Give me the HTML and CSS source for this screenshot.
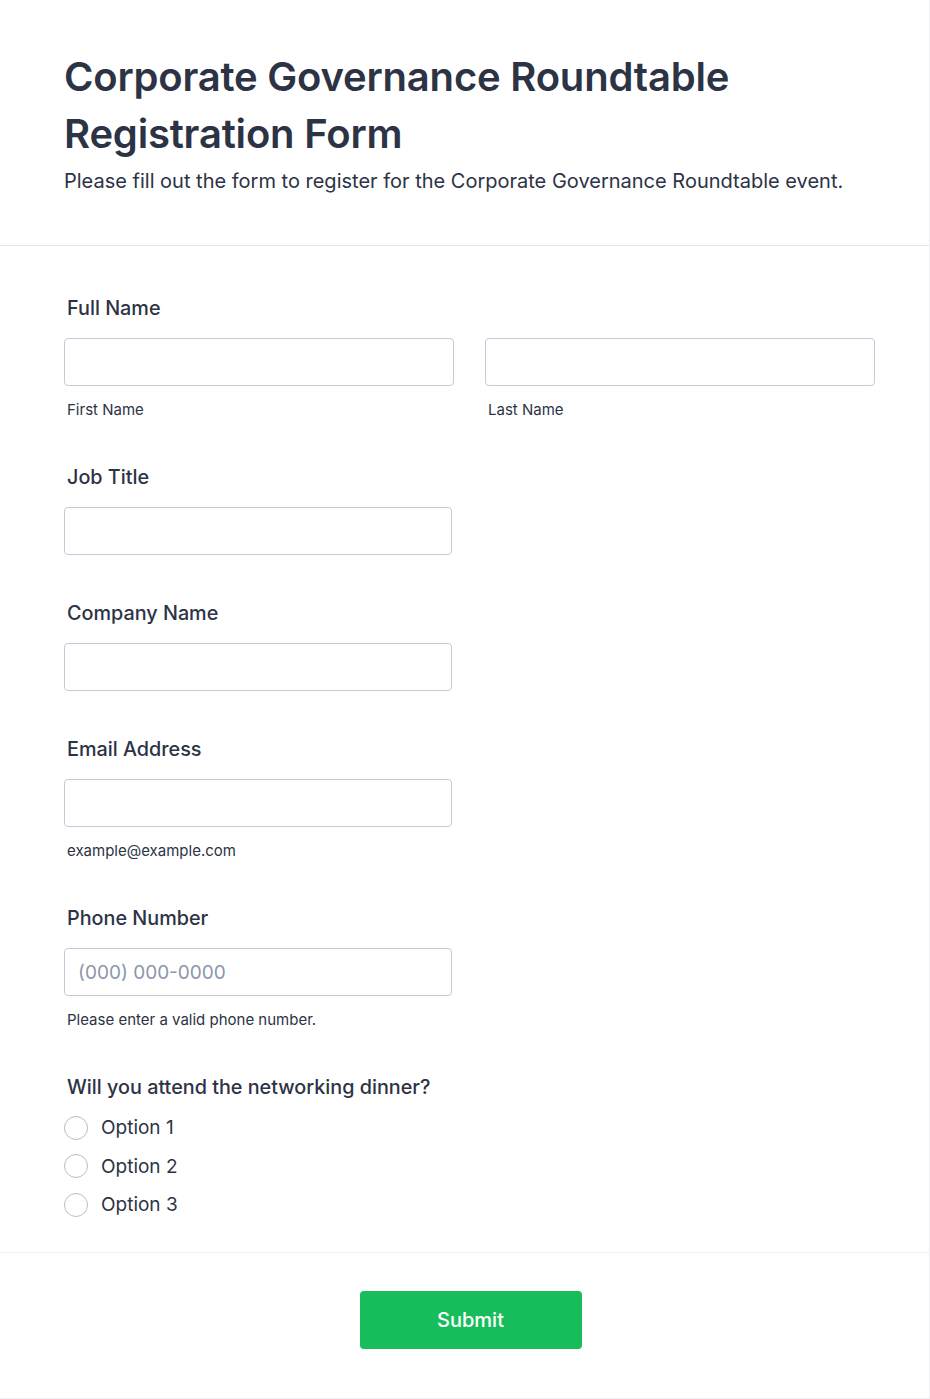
FILE: index.html
```html
<!DOCTYPE html>
<html lang="en">
<head>
<meta charset="utf-8">
<title>Corporate Governance Roundtable Registration Form</title>
<link rel="stylesheet" href="styles.css">
</head>
<body>
<div class="card">
  <header class="form-header">
    <h1 class="title">Corporate Governance Roundtable Registration Form</h1>
    <p class="subtitle">Please fill out the form to register for the Corporate Governance Roundtable event.</p>
  </header>
  <form class="form-body">
    <div class="field">
      <label class="label">Full Name</label>
      <div class="name-row">
        <div class="name-col">
          <input class="input" type="text">
          <span class="sublabel">First Name</span>
        </div>
        <div class="name-col">
          <input class="input" type="text">
          <span class="sublabel">Last Name</span>
        </div>
      </div>
    </div>
    <div class="field">
      <label class="label">Job Title</label>
      <input class="input input-half" type="text">
    </div>
    <div class="field">
      <label class="label">Company Name</label>
      <input class="input input-half" type="text">
    </div>
    <div class="field">
      <label class="label">Email Address</label>
      <input class="input input-half" type="email">
      <span class="sublabel">example@example.com</span>
    </div>
    <div class="field">
      <label class="label">Phone Number</label>
      <input class="input input-half" type="tel" placeholder="(000) 000-0000">
      <span class="sublabel">Please enter a valid phone number.</span>
    </div>
    <div class="field field-radio">
      <label class="label">Will you attend the networking dinner?</label>
      <div class="options">
        <label class="option"><span class="radio"></span>Option 1</label>
        <label class="option"><span class="radio"></span>Option 2</label>
        <label class="option"><span class="radio"></span>Option 3</label>
      </div>
    </div>
  </form>
  <div class="form-footer">
    <button class="submit" type="button">Submit</button>
  </div>
</div>
</body>
</html>
```

FILE: styles.css
```css
* { box-sizing: border-box; }
html, body { margin: 0; padding: 0; background: #ffffff; }
body {
  font-family: Inter, "Noto Sans", "Liberation Sans", sans-serif;
  color: #2c3345;
}
.card {
  width: 930px;
  min-height: 1398px;
  border-right: 1px solid #f0f1f5;
  border-bottom: 1px solid #f0f1f5;
}
.form-header {
  padding: 48px 64px 50px 64px;
  border-bottom: 1px solid #e3e5ec;
}
.title {
  margin: 0;
  font-size: 40px;
  line-height: 57px;
  font-weight: 600;
  color: #2c3345;
  letter-spacing: -0.2px;
}
.subtitle {
  margin: 5px 0 0 0;
  font-size: 20px;
  line-height: 28px;
  color: #2c3345;
}
.form-body {
  padding: 50px 54px 35px 64px;
  display: flex;
  flex-direction: column;
  gap: 46px;
  border-bottom: 1px solid #eef0f4;
}
.field {
  display: flex;
  flex-direction: column;
  align-items: flex-start;
}
.label {
  font-size: 19.8px;
  line-height: 24px;
  font-weight: 500;
  padding-left: 3px;
  margin-bottom: 18px;
  color: #2c3345;
}
.name-row {
  display: flex;
  gap: 31px;
  width: 811px;
}
.name-col {
  flex: 1;
  display: flex;
  flex-direction: column;
}
.input {
  display: block;
  width: 100%;
  height: 48px;
  border: 1px solid #c3cad8;
  border-radius: 4px;
  padding: 0 13px;
  font-family: inherit;
  font-size: 19px;
  color: #2c3345;
  background: #fff;
  outline: none;
}
.input-half { width: 388px; }
.input::placeholder { color: #8c96ab; }
.sublabel {
  display: block;
  margin-top: 15px;
  padding-left: 3px;
  font-size: 15px;
  line-height: 18px;
  color: #2c3345;
}
.field-radio .label { margin-bottom: 16px; }
.options {
  display: flex;
  flex-direction: column;
  gap: 13.5px;
}
.option {
  display: flex;
  align-items: center;
  gap: 13px;
  font-size: 19px;
  line-height: 25px;
  color: #2c3345;
}
.radio {
  width: 24px;
  height: 24px;
  border: 1px solid #b8bdc9;
  border-radius: 50%;
  background: #fff;
}
.form-footer {
  display: flex;
  justify-content: center;
  padding: 38px 0 49px 12px;
}
.submit {
  width: 222px;
  height: 58px;
  border: none;
  border-radius: 4px;
  background: #18bd5b;
  color: #ffffff;
  font-family: inherit;
  font-size: 20px;
  font-weight: 500;
}
```
